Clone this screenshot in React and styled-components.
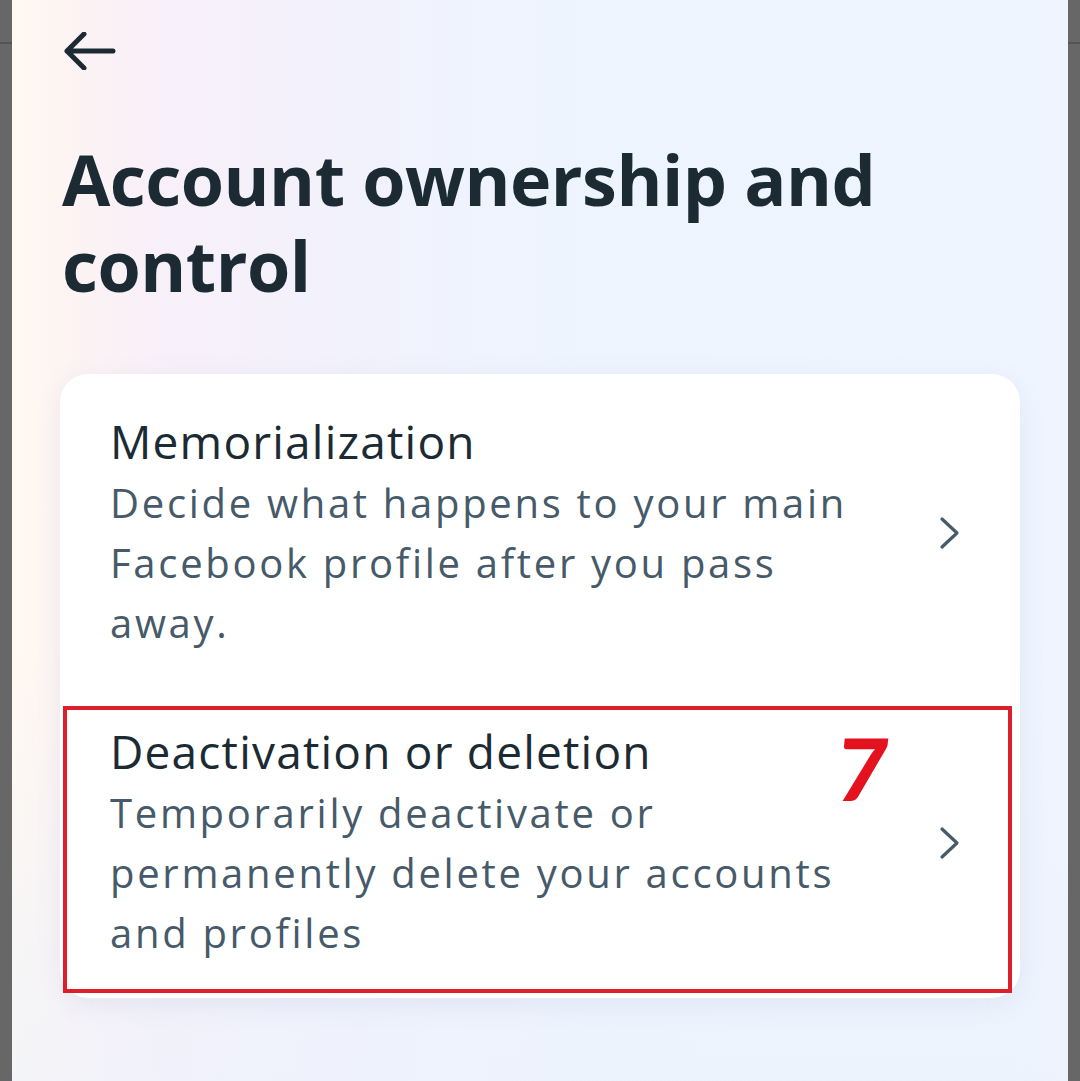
import React from "react";
import styled, { createGlobalStyle } from "styled-components";

const Global = createGlobalStyle`
  html, body { margin: 0; padding: 0; background: #666666; }
  body { font-family: "Open Sans", "Noto Sans", sans-serif; }
  * { box-sizing: border-box; }
`;

const Page = styled.div`
  display: flex;
  width: 1080px;
  height: 1081px;
  overflow: hidden;
`;

const SideBar = styled.div`
  position: relative;
  width: 12px;
  flex: none;
  background: #676767;
  &::after {
    content: "";
    position: absolute;
    left: 0;
    right: 0;
    top: 42px;
    height: 2px;
    background: #555;
  }
`;

const Screen = styled.main`
  flex: 1;
  display: flex;
  flex-direction: column;
  padding: 32px 48px 0 48px;
  background:
    linear-gradient(180deg, rgba(238,245,255,0) 60%, rgba(236,242,252,0.6) 100%),
    linear-gradient(90deg, #fff9f1 0%, #fdf3f4 6%, #f8f0f9 14%, #f2f1fc 30%, #eef4fe 50%, #eef5ff 100%);
`;

const BackButton = styled.button`
  width: 52px;
  height: 38px;
  margin-left: 4px;
  padding: 0;
  border: none;
  background: none;
  display: flex;
  align-items: center;
  color: #1c2b33;
`;

const Title = styled.h1`
  margin: 66px 0 0 2px;
  font-size: 70px;
  line-height: 86px;
  font-weight: 700;
  color: #1c2b33;
  letter-spacing: -0.5px;
`;

const Card = styled.section`
  margin-top: 66px;
  background: #ffffff;
  border-radius: 28px;
  box-shadow: 0 6px 24px rgba(120, 140, 180, 0.12);
  padding: 13px 0 9px;
  display: flex;
  flex-direction: column;
  gap: 18px;
`;

const Row = styled.div`
  position: relative;
  display: flex;
  align-items: center;
  padding: 26px 50px;
  gap: 40px;
`;

const RowText = styled.div`
  flex: 1;
  display: flex;
  flex-direction: column;
`;

const RowTitle = styled.div`
  font-size: 46px;
  line-height: 56px;
  font-weight: 500;
  letter-spacing: 1.2px;
  color: #1c2b33;
`;

const RowDesc = styled.div`
  margin-top: 4px;
  font-size: 40px;
  line-height: 60px;
  letter-spacing: 2.7px;
  color: #465a69;
`;

const Chevron = styled.div`
  width: 40px;
  display: flex;
  justify-content: center;
  color: #465a69;
`;

const Highlight = styled.div`
  position: absolute;
  left: 3px;
  right: 8px;
  top: 9px;
  bottom: -4px;
  border: 4px solid #dc1f2b;
  pointer-events: none;
`;

const Badge = styled.span`
  position: absolute;
  right: 132px;
  top: 28px;
  font-family: "Lato", "Liberation Sans", sans-serif;
  font-size: 86px;
  line-height: 86px;
  font-weight: 900;
  color: #e3121e;
  transform: skewX(-6deg);
`;

const ArrowIcon = () => (
  <svg width="52" height="38" viewBox="0 0 52 38" fill="none">
    <path d="M3 19H49M20 2L3 19L20 36" stroke="currentColor" strokeWidth="5" strokeLinecap="round" strokeLinejoin="round" />
  </svg>
);

const ChevronIcon = () => (
  <svg width="24" height="34" viewBox="0 0 24 34" fill="none">
    <path d="M4 3L19 17L4 31" stroke="currentColor" strokeWidth="3.2" strokeLinecap="round" strokeLinejoin="round" />
  </svg>
);

const items = [
  {
    title: "Memorialization",
    desc: ["Decide what happens to your main", "Facebook profile after you pass", "away."],
  },
  {
    title: "Deactivation or deletion",
    desc: ["Temporarily deactivate or", "permanently delete your accounts", "and profiles"],
    marked: "7",
  },
];

export default function App() {
  return (
    <>
      <Global />
      <Page>
        <SideBar />
        <Screen>
          <BackButton aria-label="Back">
            <ArrowIcon />
          </BackButton>
          <Title>
            Account ownership and
            <br />
            control
          </Title>
          <Card>
            {items.map((it) => (
              <Row key={it.title}>
                <RowText>
                  <RowTitle>{it.title}</RowTitle>
                  <RowDesc>
                    {it.desc.map((l, i) => (
                      <React.Fragment key={i}>
                        {l}
                        {i < it.desc.length - 1 && <br />}
                      </React.Fragment>
                    ))}
                  </RowDesc>
                </RowText>
                <Chevron>
                  <ChevronIcon />
                </Chevron>
                {it.marked && (
                  <>
                    <Highlight />
                    <Badge>{it.marked}</Badge>
                  </>
                )}
              </Row>
            ))}
          </Card>
        </Screen>
        <SideBar />
      </Page>
    </>
  );
}
